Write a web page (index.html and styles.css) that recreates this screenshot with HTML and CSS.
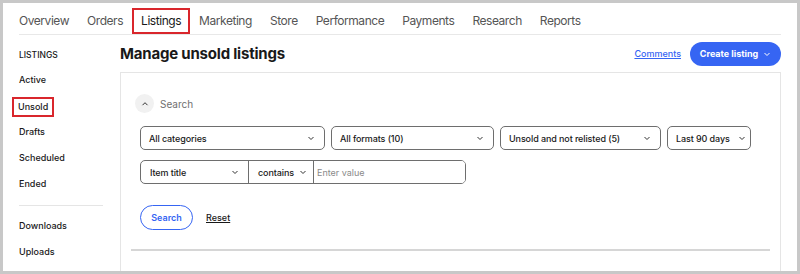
FILE: index.html
```html
<!DOCTYPE html>
<html lang="en">
<head>
<meta charset="UTF-8">
<title>Manage unsold listings</title>
<link rel="stylesheet" href="styles.css">
</head>
<body>
<div class="frame">
  <nav class="tabs">
    <a href="#" class="tab">Overview</a>
    <a href="#" class="tab">Orders</a>
    <a href="#" class="tab marked">Listings</a>
    <a href="#" class="tab">Marketing</a>
    <a href="#" class="tab">Store</a>
    <a href="#" class="tab">Performance</a>
    <a href="#" class="tab">Payments</a>
    <a href="#" class="tab">Research</a>
    <a href="#" class="tab">Reports</a>
  </nav>

  <div class="main">
    <aside class="side">
      <div class="side-title">LISTINGS</div>
      <a href="#" class="side-link">Active</a>
      <a href="#" class="side-link"><span class="marked">Unsold</span></a>
      <a href="#" class="side-link">Drafts</a>
      <a href="#" class="side-link">Scheduled</a>
      <a href="#" class="side-link">Ended</a>
      <div class="side-rule"></div>
      <a href="#" class="side-link">Downloads</a>
      <a href="#" class="side-link">Uploads</a>
    </aside>

    <section class="content">
      <div class="head">
        <h1>Manage unsold listings</h1>
        <div class="actions">
          <a href="#" class="comments">Comments</a>
          <button type="button" class="create">Create listing
            <svg width="8" height="8" viewBox="0 0 8 8"><path d="M1.5 3l2.5 2.5L6.5 3" fill="none" stroke="#fff" stroke-width="1"/></svg>
          </button>
        </div>
      </div>

      <div class="panel">
        <div class="toggle">
          <span class="toggle-btn">
            <svg width="8" height="8" viewBox="0 0 8 8"><path d="M1.5 5.2L4 2.7l2.5 2.5" fill="none" stroke="#333" stroke-width="1"/></svg>
          </span>
          <span class="toggle-label">Search</span>
        </div>

        <div class="filters">
          <div class="select w-cat">All categories <svg class="chev" width="8" height="8" viewBox="0 0 8 8"><path d="M1.5 3l2.5 2.5L6.5 3" fill="none" stroke="#333" stroke-width="1"/></svg></div>
          <div class="select w-fmt">All formats (10) <svg class="chev" width="8" height="8" viewBox="0 0 8 8"><path d="M1.5 3l2.5 2.5L6.5 3" fill="none" stroke="#333" stroke-width="1"/></svg></div>
          <div class="select w-status">Unsold and not relisted (5) <svg class="chev" width="8" height="8" viewBox="0 0 8 8"><path d="M1.5 3l2.5 2.5L6.5 3" fill="none" stroke="#333" stroke-width="1"/></svg></div>
          <div class="select w-days">Last 90 days <svg class="chev" width="8" height="8" viewBox="0 0 8 8"><path d="M1.5 3l2.5 2.5L6.5 3" fill="none" stroke="#333" stroke-width="1"/></svg></div>
        </div>

        <div class="query">
          <div class="q-part w-field">Item title <svg class="chev" width="8" height="8" viewBox="0 0 8 8"><path d="M1.5 3l2.5 2.5L6.5 3" fill="none" stroke="#333" stroke-width="1"/></svg></div>
          <div class="q-part w-op">contains <svg class="chev" width="8" height="8" viewBox="0 0 8 8"><path d="M1.5 3l2.5 2.5L6.5 3" fill="none" stroke="#333" stroke-width="1"/></svg></div>
          <input type="text" class="q-input" placeholder="Enter value">
        </div>

        <div class="buttons">
          <button type="button" class="search">Search</button>
          <a href="#" class="reset">Reset</a>
        </div>

        <div class="panel-rule"></div>
      </div>
    </section>
  </div>
</div>
</body>
</html>
```

FILE: styles.css
```css
* {
  box-sizing: border-box;
}

body {
  margin: 0;
  font-family: Inter, "Liberation Sans", sans-serif;
  color: #191919;
}

a {
  color: inherit;
  text-decoration: none;
}

.frame {
  width: 800px;
  height: 274px;
  border: 3px solid #c8c8c8;
  background: #fff;
  overflow: hidden;
}

/* top tabs */
.tabs {
  display: flex;
  margin: 5px 16px 0;
  border-bottom: 1px solid #e8e8e8;
  height: 27px;
}

.tab {
  padding: 0 9px;
  height: 26px;
  line-height: 26px;
  font-size: 12px;
  letter-spacing: -0.45px;
  color: #555;
}

.tab:first-child {
  margin-left: -9px;
}

.tab.marked {
  color: #191919;
}

.marked {
  outline: 2px solid #d9262c;
  outline-offset: -2px;
}

/* layout */
.main {
  display: flex;
}

.side {
  width: 117px;
  padding: 10px 0 0 16px;
  display: flex;
  flex-direction: column;
  align-items: flex-start;
}

.side-title {
  font-size: 8.5px;
  font-weight: 500;
  height: 20px;
  line-height: 20px;
  margin-bottom: 2px;
}

.side-link {
  font-size: 9px;
  font-weight: 500;
  height: 26px;
  line-height: 26px;
}

.side-link .marked {
  display: inline-block;
  vertical-align: middle;
  margin-left: -7px;
  padding: 0 6px;
  height: 20px;
  line-height: 20px;
}

.side-rule {
  width: 84px;
  height: 1px;
  background: #e5e5e5;
  margin: 8px 0 7px;
}

.content {
  flex: 1;
  margin-right: 16px;
}

.head {
  display: flex;
  align-items: center;
  justify-content: space-between;
  height: 37px;
}

h1 {
  margin: 0;
  font-size: 15px;
  font-weight: 700;
  letter-spacing: -0.2px;
}

.actions {
  display: flex;
  align-items: center;
  gap: 9px;
}

.comments {
  color: #3665f3;
  text-decoration: underline;
  font-size: 9px;
  font-weight: 500;
}

.create {
  display: flex;
  align-items: center;
  justify-content: center;
  gap: 5px;
  width: 91px;
  height: 24px;
  padding: 0;
  border: none;
  border-radius: 12px;
  background: #3665f3;
  color: #fff;
  font-family: inherit;
  font-size: 9px;
  font-weight: 700;
}

/* search panel */
.panel {
  border: 1px solid #e5e5e5;
  padding: 21px 19px 0;
  height: 220px;
}

.toggle {
  display: flex;
  align-items: center;
  gap: 6px;
  margin-left: -5px;
}

.toggle-btn {
  width: 19px;
  height: 19px;
  border-radius: 50%;
  background: #f1f1f1;
  display: flex;
  align-items: center;
  justify-content: center;
}

.toggle-label {
  font-size: 10px;
  color: #707070;
}

.filters {
  display: flex;
  gap: 6px;
  margin-top: 13px;
}

.select {
  display: flex;
  align-items: center;
  gap: 8px;
  height: 24px;
  padding: 0 9px 0 8px;
  border: 1px solid #6e6e6e;
  border-radius: 5px;
  font-size: 9px;
  font-weight: 500;
  letter-spacing: -0.1px;
  white-space: nowrap;
}

.chev {
  margin-left: auto;
  flex-shrink: 0;
}

.w-cat { width: 185px; }
.w-fmt { width: 163px; }
.w-status { width: 161px; }
.w-days { width: 84px; }

.query {
  display: flex;
  width: 326px;
  height: 24px;
  margin-top: 10px;
  border: 1px solid #6e6e6e;
  border-radius: 5px;
  overflow: hidden;
}

.q-part {
  display: flex;
  align-items: center;
  gap: 5px;
  padding: 0 9px;
  border-right: 1px solid #6e6e6e;
  font-size: 9px;
  font-weight: 500;
  letter-spacing: -0.1px;
  white-space: nowrap;
}

.w-field { width: 108px; }
.w-op { width: 65px; padding-right: 7px; }

.q-input {
  flex: 1;
  border: none;
  padding: 0 3px;
  font-family: inherit;
  font-size: 9px;
  outline: none;
}

.q-input::placeholder {
  color: #8a8a8a;
}

.buttons {
  display: flex;
  align-items: center;
  gap: 13px;
  margin-top: 21px;
}

.search {
  height: 25px;
  width: 53px;
  border: 1px solid #3665f3;
  border-radius: 13px;
  background: #fff;
  color: #3665f3;
  font-family: inherit;
  font-size: 9px;
  font-weight: 600;
}

.reset {
  font-size: 9px;
  font-weight: 500;
  text-decoration: underline;
}

.panel-rule {
  height: 2px;
  background: #d6d6d6;
  margin: 19px -9px 0;
}
```
